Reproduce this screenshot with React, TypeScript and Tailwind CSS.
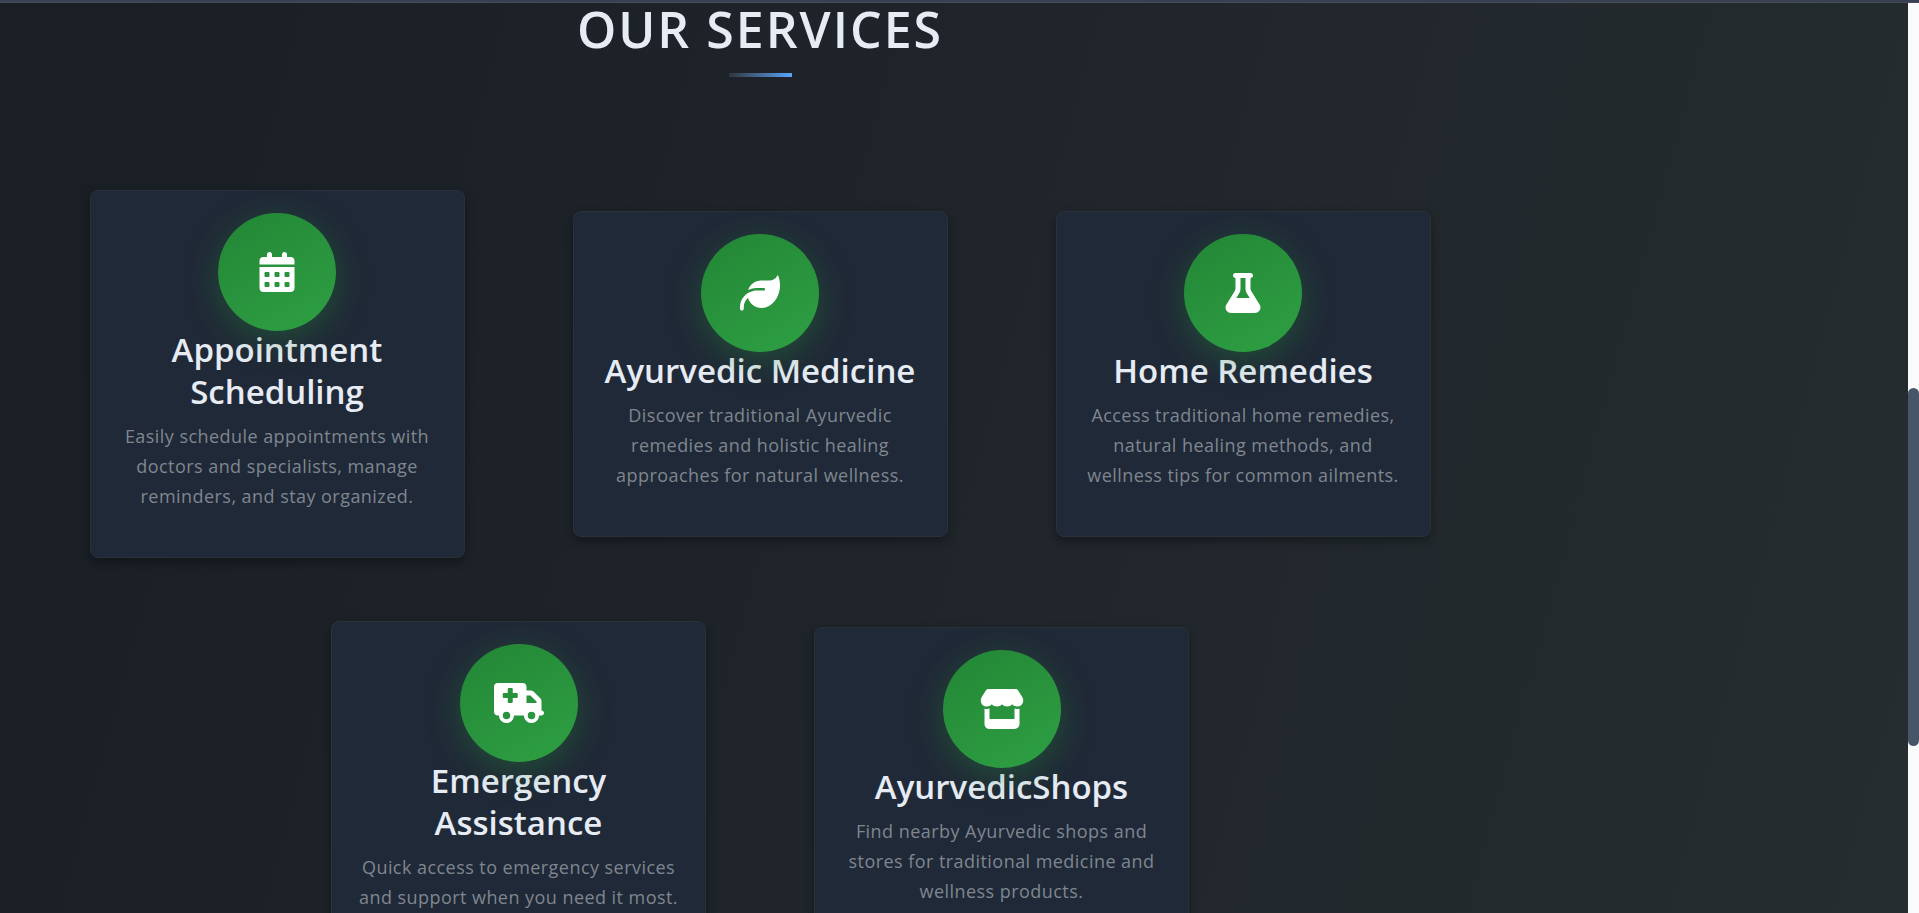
import { FaCalendarDays, FaFlask, FaLeaf, FaStore, FaTruckMedical } from "react-icons/fa6";
import type { IconType } from "react-icons";

type Service = { title: string; text: string; icon: IconType };

const services: Service[] = [
  {
    title: "Appointment Scheduling",
    text: "Easily schedule appointments with doctors and specialists, manage reminders, and stay organized.",
    icon: FaCalendarDays,
  },
  {
    title: "Ayurvedic Medicine",
    text: "Discover traditional Ayurvedic remedies and holistic healing approaches for natural wellness.",
    icon: FaLeaf,
  },
  {
    title: "Home Remedies",
    text: "Access traditional home remedies, natural healing methods, and wellness tips for common ailments.",
    icon: FaFlask,
  },
  {
    title: "Emergency Assistance",
    text: "Quick access to emergency services and support when you need it most.",
    icon: FaTruckMedical,
  },
  {
    title: "AyurvedicShops",
    text: "Find nearby Ayurvedic shops and stores for traditional medicine and wellness products.",
    icon: FaStore,
  },
];

function ServiceCard({ title, text, icon: Icon }: Service) {
  return (
    <article className="flex w-[375px] flex-col items-center rounded-lg border border-[#2a3138] bg-[#202937] px-6 pt-[22px] pb-[46px] text-center shadow-[0_4px_10px_rgba(0,0,0,0.35)]">
      <div className="relative z-10 -mb-[2px] flex size-[118px] shrink-0 items-center justify-center rounded-full bg-linear-150 from-[#238636] to-[#2ea043] text-white shadow-[0_8px_32px_rgba(35,134,54,0.4)]">
        <Icon aria-hidden="true" className="h-10 w-[50px]" />
      </div>
      <h3 className="text-[33px] leading-[42px] font-semibold text-[#e6ebf4]">{title}</h3>
      <p className="mt-2 text-[18px] leading-[30px] tracking-wide text-[#7f868f]">{text}</p>
    </article>
  );
}

export default function App() {
  return (
    <div className="flex h-screen flex-col overflow-hidden bg-[#1e2329] font-['Open_Sans','Noto_Sans',sans-serif]">
      <div className="h-[3px] shrink-0 border-b border-[#484d55] bg-[#374055]" />
      <div className="flex min-h-0 flex-1">
        <main className="min-w-0 flex-1 overflow-hidden bg-linear-105 from-[#1a1f26] from-5% via-[#20252b] via-50% to-[#252d2f]">
          <section className="flex max-w-[1520px] flex-col items-center">
            <h2 className="text-[50px] leading-[52px] font-semibold tracking-[2px] text-[#e6ebf4]">OUR SERVICES</h2>
            <div className="mt-[18px] h-1 w-[63px] bg-linear-to-r from-[#30363d] to-[#58a6ff]" />
            <div className="mt-[113px] flex flex-wrap items-center justify-center gap-x-[108px] gap-y-[63px]">
              {services.map((service) => (
                <ServiceCard key={service.title} {...service} />
              ))}
            </div>
          </section>
        </main>
        <div className="flex w-[11px] shrink-0 flex-col bg-[#f8fafc]">
          <div className="h-[42.3%]" />
          <div className="h-[39.4%] rounded-full bg-[#475569]" />
        </div>
      </div>
    </div>
  );
}
